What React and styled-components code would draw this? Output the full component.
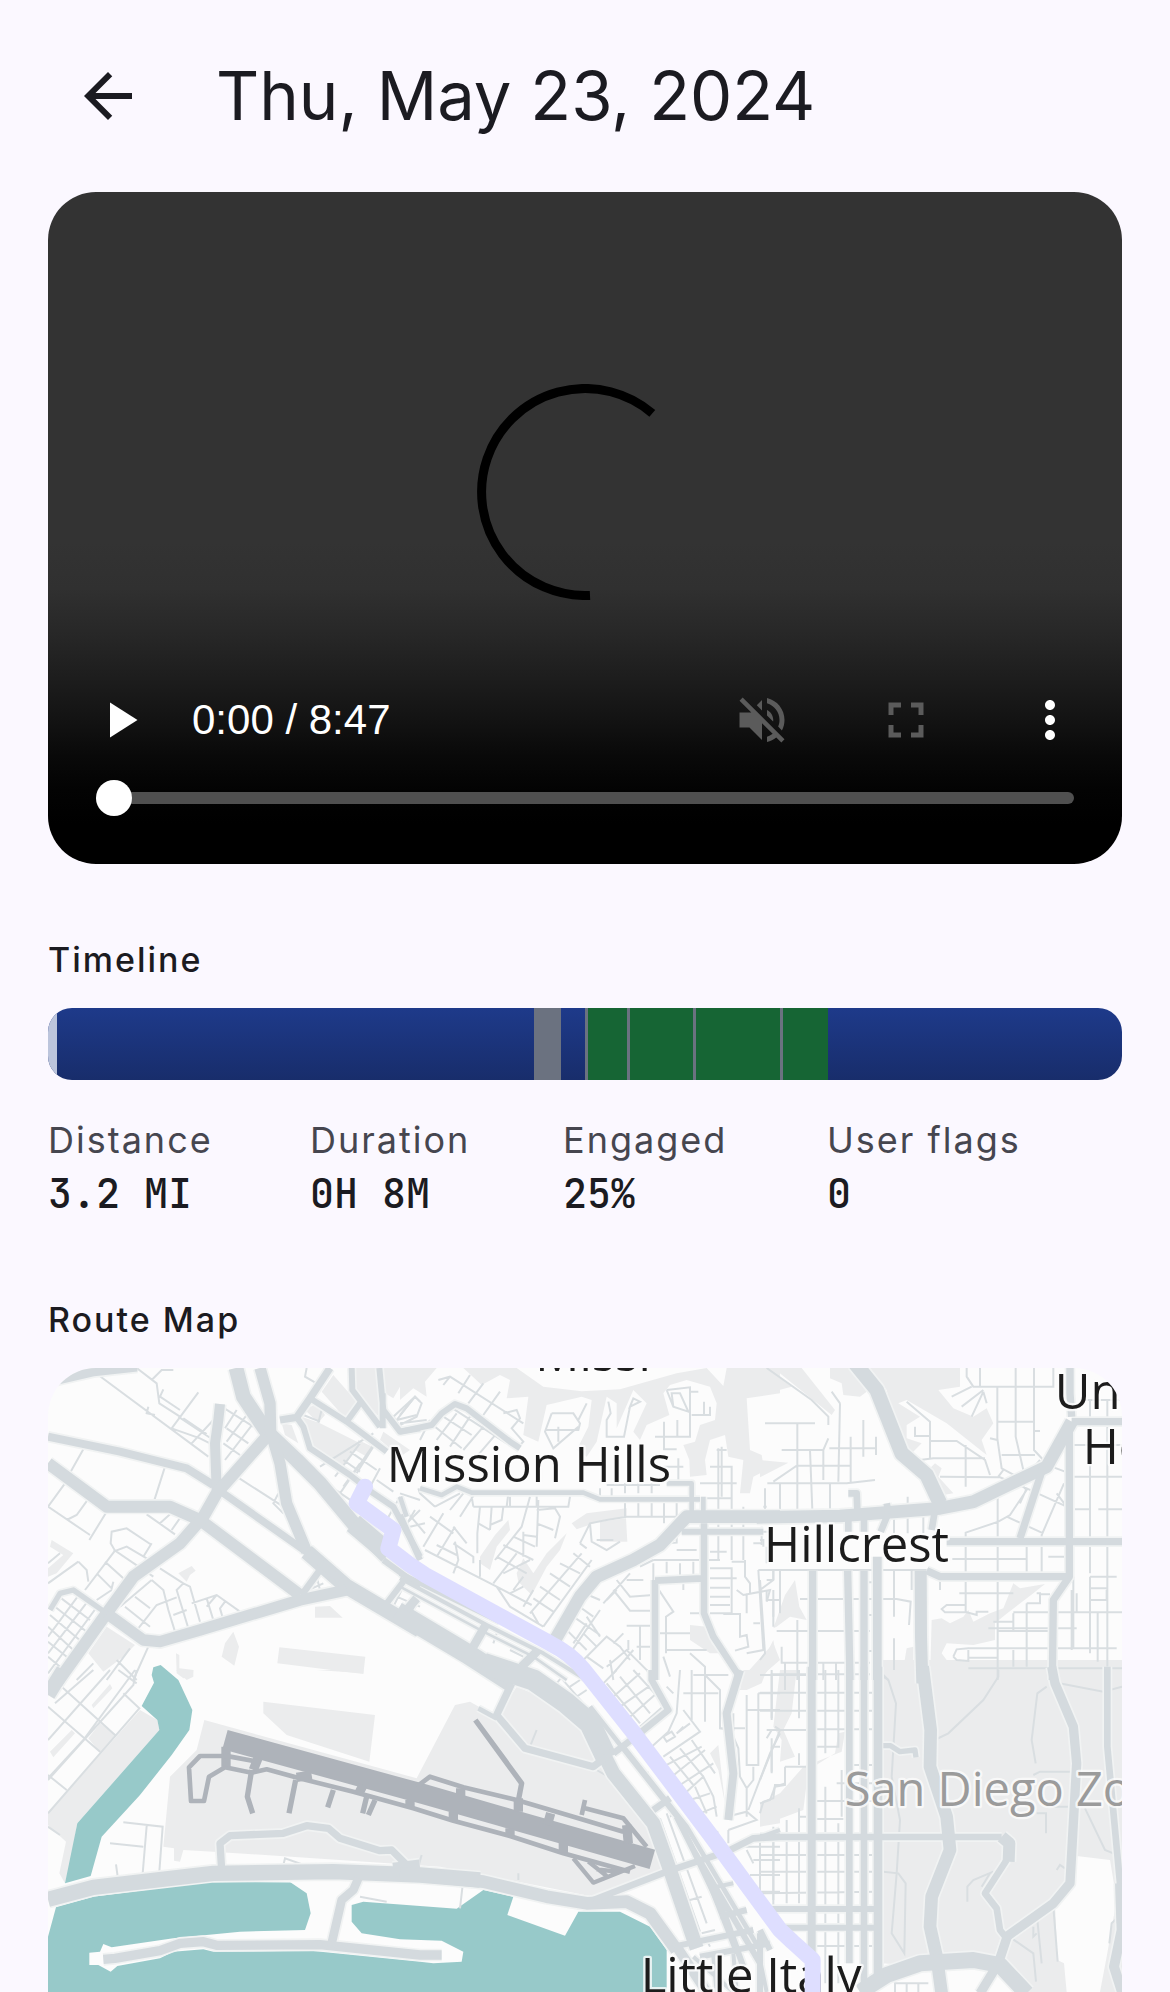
import React from 'react';
import styled, { createGlobalStyle } from 'styled-components';

const GlobalStyle = createGlobalStyle`
  *, *::before, *::after { box-sizing: border-box; }
  body {
    margin: 0;
    background: #fbf8ff;
    color: #1b1b21;
    font-family: Inter, 'Liberation Sans', sans-serif;
  }
`;

const Page = styled.div`
  display: flex;
  flex-direction: column;
  overflow: hidden;
`;

const TopBar = styled.header`
  display: flex;
  align-items: center;
  gap: 36px;
  height: 192px;
  padding: 0 36px;
`;

const BackButton = styled.button`
  display: grid;
  place-items: center;
  width: 144px;
  height: 144px;
  padding: 0;
  border: 0;
  border-radius: 50%;
  background: transparent;
  color: inherit;
`;

const Title = styled.h1`
  margin: 0;
  font-size: 67px;
  line-height: 84px;
  font-weight: 400;
  white-space: nowrap;
`;

const Content = styled.main`
  display: flex;
  flex-direction: column;
  gap: 72px;
  padding: 0 48px;
`;

const Player = styled.section`
  position: relative;
  display: flex;
  flex-direction: column;
  justify-content: flex-end;
  aspect-ratio: 1074 / 672;
  border-radius: 48px;
  overflow: hidden;
  background: linear-gradient(
    to bottom,
    #333333 52%,
    #303030 59%,
    #272727 66%,
    #1c1c1c 73%,
    #121212 79%,
    #090909 84%,
    #030303 89%,
    #000000 94%
  );
`;

const Spinner = styled.svg`
  position: absolute;
  top: 192px;
  left: 50%;
  width: 216px;
  height: 216px;
  margin-left: -108px;
`;

const Controls = styled.div`
  display: flex;
  align-items: center;
  height: 96px;
  margin-bottom: 12px;
`;

const ControlButton = styled.button`
  display: grid;
  place-items: center;
  width: 144px;
  height: 96px;
  padding: 0;
  border: 0;
  background: transparent;
  color: #ffffff;
  &:disabled { color: #5b5b5b; }
`;

const Time = styled.span`
  flex: 1;
  color: #ffffff;
  font-family: 'Liberation Sans', Arial, sans-serif;
  font-size: 42px;
  line-height: 48px;
`;

const Seek = styled.input`
  appearance: none;
  height: 36px;
  margin: 0 48px 48px;
  background: transparent;
  &::-webkit-slider-runnable-track {
    height: 12px;
    border-radius: 6px;
    background: #505050;
  }
  &::-webkit-slider-thumb {
    appearance: none;
    width: 36px;
    height: 36px;
    margin-top: -12px;
    border-radius: 50%;
    background: #ffffff;
  }
`;

const Section = styled.section`
  display: flex;
  flex-direction: column;
  gap: 24px;
`;

const SectionTitle = styled.h2`
  margin: 0;
  font-size: 34px;
  line-height: 48px;
  font-weight: 500;
  letter-spacing: 2px;
`;

const Track = styled.div`
  position: relative;
  height: 72px;
  border-radius: 24px;
  overflow: hidden;
  background: linear-gradient(to bottom, #1e3a8a, #182d6b);
`;

const Segment = styled.div`
  position: absolute;
  top: 0;
  bottom: 0;
  background: ${(p) => p.$color};
`;

const Stats = styled.dl`
  display: grid;
  grid-template-columns: 262fr 253fr 264fr 295fr;
  margin: 12px 0 0;
`;

const StatLabel = styled.dt`
  color: #46464f;
  font-size: 36px;
  line-height: 48px;
  letter-spacing: 2px;
`;

const StatValue = styled.dd`
  margin: 0;
  font-family: 'JetBrains Mono', 'DejaVu Sans Mono', monospace;
  font-size: 40px;
  line-height: 60px;
  font-weight: 500;
`;

const MapFrame = styled.div`
  border-radius: 48px 48px 0 0;
  overflow: hidden;
  background: #fcfcfc;
`;

const MapDrawing = styled.svg`
  display: block;
  width: 100%;
  height: auto;
`;

const MapLabel = styled.text`
  fill: ${(p) => (p.$muted ? '#9b9b9b' : '#1c1c1c')};
  font-family: 'Open Sans', 'Noto Sans', sans-serif;
  font-size: ${(p) => (p.$muted ? 141 : 147)}px;
  font-weight: ${(p) => (p.$muted ? 500 : 400)};
  paint-order: stroke;
  stroke: rgba(252, 252, 252, 0.8);
  stroke-width: 14px;
  stroke-linejoin: round;
`;

function Icon({ path, size = 60 }) {
  return (
    <svg width={size} height={size} viewBox="0 0 24 24" fill="currentColor" aria-hidden="true">
      <path d={path} />
    </svg>
  );
}

const ICONS = {
  back: 'M20 11H7.83l5.59-5.59L12 4l-8 8 8 8 1.41-1.41L7.83 13H20v-2z',
  play: 'M8 5v14l11-7z',
  muted:
    'M16.5 12c0-1.77-1.02-3.29-2.5-4.03v2.21l2.45 2.45c.03-.2.05-.41.05-.63zm2.5 0c0 .94-.2 1.82-.54 2.64l1.51 1.51C20.63 14.91 21 13.5 21 12c0-4.28-2.99-7.86-7-8.77v2.06c2.89.86 5 3.54 5 6.71zM4.27 3L3 4.27 7.73 9H3v6h4l5 5v-6.73l4.25 4.25c-.67.52-1.42.93-2.25 1.18v2.06c1.38-.31 2.63-.95 3.69-1.81L19.73 21 21 19.73l-9-9L4.27 3zM12 4L9.91 6.09 12 8.18V4z',
  fullscreen:
    'M7 14H5v5h5v-2H7v-3zm-2-4h2V7h3V5H5v5zm12 7h-3v2h5v-5h-2v3zM14 5v2h3v3h2V5h-5z',
  more: 'M12 8c1.1 0 2-.9 2-2s-.9-2-2-2-2 .9-2 2 .9 2 2 2zm0 2c-1.1 0-2 .9-2 2s.9 2 2 2 2-.9 2-2-.9-2-2-2zm0 6c-1.1 0-2 .9-2 2s.9 2 2 2 2-.9 2-2-.9-2-2-2z',
};

const SEGMENTS = [
  { from: 0, to: 9, color: '#bcc5dc' },
  { from: 486, to: 513, color: '#6b7280' },
  { from: 537, to: 780, color: '#166534' },
  { from: 537, to: 540, color: '#6b7280' },
  { from: 579, to: 582, color: '#6b7280' },
  { from: 645, to: 648, color: '#6b7280' },
  { from: 732, to: 735, color: '#6b7280' },
];
const ROUTE_LENGTH = 1074;

const STATS = [
  ['Distance', '3.2 MI'],
  ['Duration', '0H 8M'],
  ['Engaged', '25%'],
  ['User flags', '0'],
];

// The map is split into sectors; each keeps its own origin in map units.
const SECTORS = [
  {
    x: -24,
    y: -24,
    parks:
      'M845 95L880 45L950 125L920 180zM795 150L830 130L855 165L835 188zM785 170L840 190L960 250L910 320L805 265zM940 24H1010L1025 180L945 90zM1030 24H1140V80L1080 80L1060 115L1035 100zM725 190L755 195L775 250L735 225zM145 880L200 800L285 855L250 890L190 935zM545 890L555 850L580 815L597 860L583 917zM415 640L455 618L467 632L450 645L440 665zM825 740L870 738L908 773H825zM718 862L976 890L970 942L712 910zM408 880L418 885V925L460 930L458 950L430 955L410 940zM35 540L100 580L50 640L24 650V625L70 585L30 560zM955 240L1000 262L980 290L945 270zM1030 215L1110 270L1080 290L1020 240z',
    minor:
      'M175 45L505 290M290 24L350 70L358 130L420 170M400 30H365L335 60M420 150L360 110L370 88M475 97L395 205M325 140L320 160L345 165M520 180L455 250M545 140L640 200M590 150L555 205M620 165L560 245M640 190L555 300M560 205L625 250M550 250L600 285M430 175L500 222M395 205L480 235L510 250M415 170L520 240M130 268L92 335M375 320L340 430M75 370L24 440M24 440L150 525M150 410L110 465L80 480M200 455L148 540M320 463L405 523M410 445L360 490M430 460L395 510M590 350L730 440M715 400L700 430L730 460M335 550L310 590M335 555L260 505L215 515L212 550L225 572L340 650M225 572L135 690M220 575L260 560L320 595M195 605L250 655M170 640L215 685L220 665M215 690L170 720M115 605L140 630L145 665M24 670L115 605M120 700L24 830M150 715L24 880M175 735L24 940M60 712L150 780M45 740L140 815M30 765L125 845M24 800L100 870M24 845L80 890M24 890L60 920M360 625L430 670L450 680L480 785M430 670L410 690L445 805M335 660L370 690L385 750L405 815M335 660L240 740M285 710L330 745M255 740L330 800M295 805L350 735L410 712M400 765L440 750M455 730L530 705L600 755M500 715L520 780M555 725L540 745L550 780M530 705L500 740M325 860L280 960M270 865L200 960M230 900L290 960M160 910L110 960M840 320L1000 220M885 350L960 250M930 275L1010 330M910 300L960 335M900 400L1010 240M880 385L960 440M960 310L910 380M1000 260L950 340M1020 325L980 400M1010 360L1060 395M1080 410L1040 480M1140 450L1090 500M1070 470L1110 510M1140 420L1080 400M790 165L840 185M850 130L835 188M800 24L795 50L830 70M1125 110L1070 180L1130 165M1080 200L1060 170L1125 110L1140 125M1090 680L1060 740M1070 710L1140 740M960 130L1020 180M830 650L840 690M805 690L850 670M24 610L60 580',
    roads: [
      [50, 'M24 55L160 24L290 10'],
      [36, 'M24 310L200 440H390L480 480L780 705'],
      [24, 'M24 230L240 275L440 325L520 375'],
      [30, 'M540 132L535 180L525 250L530 390'],
      [44, 'M588 24L610 110L680 215L770 300L840 370L940 490L1040 590'],
      [34, 'M660 24L690 130L692 215L720 310L740 430L800 575'],
      [46, 'M800 575L920 680L1140 810'],
      [60, 'M940 490L1040 575'],
      [36, 'M680 230L530 400L490 470L420 550L280 650L200 760L50 970'],
      [22, 'M550 400L820 590L900 660'],
      [34, 'M200 760L310 840L360 845L480 810L780 720L920 690'],
      [16, 'M30 750L60 700L100 690L200 760'],
      [20, 'M785 705L840 630'],
      [22, 'M720 180L770 172L810 115L870 24'],
      [18, 'M770 172L790 200L810 265L930 345L1000 400L1060 440L1140 590'],
      [18, 'M810 115L920 185L1040 275M920 185L960 130'],
      [18, 'M935 24L937 90L1020 200M1018 24L1030 150L1080 215L1140 205M1028 205L1028 100'],
      [18, 'M1040 730L1090 665M1030 600L1140 680M1100 770L1120 730'],
    ],
  },
  {
    x: 1056,
    y: -24,
    parks:
      'M0 24H110L75 65L80 110L40 85L0 120zM190 24H350L430 80L545 94L660 88L830 40L920 24L970 78L980 24H1140V100L1040 115L1050 270L1085 285L1090 315L1140 310L1060 350L1050 400H1020L1030 300L985 290L975 225L930 240L915 300L920 345L870 350L868 300L850 255L885 245L900 195L945 180L950 130L930 80L860 60L810 75L790 100L808 165L740 195L720 240L700 215L740 130L700 90L650 205L650 130L620 110L590 245L560 290L530 270L565 200L575 120L545 110L440 135L415 245L370 225L385 110L320 115L330 60L300 45L245 75zM515 490L560 460L680 445V470L610 480L530 508zM600 485L678 475L682 545H600zM240 590L285 525L325 480L330 510L290 560L270 630L240 610zM350 640L370 595L400 640L440 580L500 520L480 570L440 620L395 705L355 665zM870 795L920 800L935 850L960 880L930 880L870 840zM1030 950L1120 850L1140 900L1070 960H1030z',
    minor:
      'M0 165L45 110L65 130L50 170L0 195M80 180L0 190M115 60L150 50L370 190M150 50L130 75M210 45L175 100M250 70L205 130M300 95L250 165M310 160L350 150L360 175L335 205L370 245L355 260M130 170L215 225M105 200L185 265M150 140L320 250M90 180L60 240M170 160L110 240M210 170L150 260M250 200L190 270M290 220L230 290M455 160H520L540 190L535 210H440M455 160L435 215L460 265L535 200M475 200L475 245M560 130L535 180M700 115L720 125L690 140zM690 140L672 230H620V180L632 160L625 125M800 90L870 82V230H765M800 90L820 140L865 155L840 100L815 100L820 140M870 95H895M875 165L930 165V140M912 125V165M792 185V270M832 180V230M790 268H830M950 270H980M955 265V455M930 320L995 320V455M900 370H1010M900 415H995M835 295V380M790 320H850M220 440H320L325 400M220 440L215 410M320 440H410V400M330 440V410M410 440L505 440L510 410M55 385L60 400L105 440M105 440L180 400M150 450L190 400M180 470L225 400M240 440L232 520V580M275 440L270 510M310 440L305 480L270 495M270 510L235 490M390 410L365 500L285 600M415 420L410 560M410 450L465 445L480 470L465 535M410 490L460 510M370 515V590M370 525L410 530M130 460L70 560M165 500L110 590M90 470L160 520M160 500L200 550M160 550L220 590V610M110 555L170 585M75 570L290 680M165 545L175 600L160 640M240 600V650M310 555L400 600M290 590L380 640M340 530L405 560M280 670L350 580M290 680L330 740L430 800M310 640L390 600M340 690L370 650M290 680L395 735M430 800L575 600M390 760L545 580M370 740L400 690M395 755L415 790M400 715L460 755M420 680L480 720M450 640L510 680M480 610L540 640M520 580L570 620M540 550L570 490L620 480L680 470H860M570 490L575 545L620 570L660 545M540 550L560 565M590 540H640M675 410V470M715 410V470M755 410V470M792 410V490M830 410V470M600 385V410M635 385V410M675 370V400M715 370V400M755 370V400M620 375H780M760 600H960M720 620L760 600M760 610V680M800 550L830 548V520M800 605V640M830 570H890M840 610V655M880 605V655M690 640L610 730M730 660H680M650 660L690 710L760 705M640 690L690 752H755M620 720L650 690M680 797H750M720 797V900M710 860H760M770 820H870M770 680L820 755L798 770V880M798 870H920M790 890L810 950M870 880L915 920V960M930 575H980M955 480V600M995 480V600M1030 440V600M930 625H995V760H930M930 655H1010M930 683H990M930 710H990M930 735H990M995 605H1035M1035 600V650L1050 670V700M1010 690L1030 705L1110 690L1100 725M1075 630H1140M1075 630L1090 870L1040 880M1060 790L1080 790M970 762H1020V830L1040 825L1045 860L1005 872M1085 555V500M1085 550H1060M1120 660V630M1100 560V610M1120 720V800M870 760H905M850 670V690M560 790L520 850M600 750L510 880M590 860L550 820M550 900L620 830L660 860L690 900M640 850L670 820M620 920L680 870L760 950M560 890L610 925M630 900L640 960M700 870L640 940M685 840V870M530 690L600 720M510 720L580 770M560 770L600 830M490 800L560 870M520 770L600 825M965 260V410M1040 700V760M20 455L75 520M45 450L10 510M30 500L75 490M330 870L370 890M290 820L280 850M330 700L370 680',
    roads: [
      [18, 'M0 215L95 195L125 160L165 132L200 145L330 245L360 265'],
      [14, 'M60 385L125 405L170 380L215 398H550L600 418H900M0 410L20 470M800 370H875V470M910 410V480'],
      [38, 'M1140 470H860L780 555L700 600L590 650L540 710L465 840'],
      [18, 'M845 515H1090'],
      [20, 'M912 490V760L940 830L1015 945M765 660L765 960M765 662L905 655'],
      [18, 'M0 465L60 600'],
      [12, 'M0 655L260 795L430 880L560 960'],
      [8, 'M0 680L250 815L400 890L500 960'],
      [60, 'M-10 755L200 880L340 970'],
      [26, 'M220 860L260 790M365 920L415 870M20 750L50 715'],
      [16, 'M0 640L300 785'],
    ],
  },
  {
    x: 2136,
    y: -24,
    parks:
      'M0 24H20L95 80L0 105zM40 24H125L225 150L215 165zM210 24H270L320 95L300 110L250 105L245 70L210 55zM330 24H600V80L535 90L580 145L640 170L680 145L700 190L665 240L680 285L560 190L440 120L415 130L480 170L440 195L440 235L485 250L450 285L400 180L380 90zM505 330L525 310L545 325L535 350L580 400L550 405L510 350zM0 300L85 308L0 352zM40 805L75 705L105 660L118 740L140 780L90 770L50 800zM515 780L545 775L570 790L610 770L625 750L640 785L690 760L730 745L760 670L780 685L855 672L820 700L735 765L705 790V840L640 855L560 850L545 880L575 920L540 925L545 960H510zM370 930L430 925L440 865L460 860V960H370zM0 920L40 840L50 900L0 960zM520 925H1086V960H520z',
    minor:
      'M15 190H165M112 190V265M65 270H190L205 235M190 270V360M150 270L157 450M112 265V450M240 130L235 365M215 95L240 130M310 180V290M208 265H345M348 230V285M272 230V370M40 365L110 317H270M22 370H260L345 360M60 370V450M210 370V450M15 385V450M10 440H20M620 24V50L640 80H880V24M660 24V80M767 24V230L790 330M822 24V270L850 300M712 80V185H820M712 185V235L725 325L790 360L840 300M725 285H825M820 213H840M690 235L712 240M575 110L635 80M670 90L605 140M670 95L635 170M670 95L680 130M440 125L510 185V295M465 200L465 228H510V243H590L675 300L690 345M480 300L520 295H675M617 255V380M540 350L720 352L800 385M715 350L730 330M20 24L155 120L205 170V195M940 255H1086M940 350H1086M945 448H990M1015 448H1086M990 120V448M1042 120V640M990 345V640M1086 120H960M875 320L915 335M890 400L920 440M800 385L920 440M780 370L800 390L750 465L715 485L617 518V755M912 370L845 525V640M740 470L850 520M713 400V960M800 385L780 430M577 597H800V655M800 540V597M865 590H915M443 410V520M490 470V520M402 470V520M0 515H30M0 540H10V560M0 630H500M0 690L40 660V630M60 630V760M20 660H40M20 690L20 720H60M40 690V770M0 660L15 880L0 900M50 813H330M112 780V960M320 765H340M320 667H340M320 873H340M402 630V770M402 835V930M340 717H410L452 725L447 795M120 717H340M455 630V690M500 640L540 650V690M598 700H760M617 735H560L545 747L555 757H620L650 765V755H685M800 730H840V700H830M760 760V810M760 757H930M700 785H760M685 805H950M800 730V920M760 870V920M712 813H870M580 890L590 868L625 865H1000M580 890L590 900L625 903V870M625 925H1086M625 893H712M940 650V865H1070M935 690V870M990 650H1070M990 685H1040M990 720H1040V690M1042 640V920M990 650V880M1013 760V905M850 757H1086M950 700V760M1030 865H1070M840 703H870M65 860V908H330M75 908V960M150 908V960M190 908V960M228 908V960M35 943H330M370 945L385 960',
    roads: [
      [44, 'M285 10L350 90L425 280L500 345L540 430'],
      [38, 'M-10 472L240 468L540 445L640 425L860 320L935 185'],
      [22, 'M935 185H1086M930 24V100L935 170M928 185V650L880 720L877 960'],
      [22, 'M560 545H1086M500 632L540 650H925'],
      [22, 'M850 320L780 535'],
      [20, 'M265 400H290L292 450M265 470V515M312 470V515M380 430L385 455M385 460L362 515M525 450L515 510'],
      [22, 'M158 632V960M263 632L270 960M312 632V960'],
      [26, 'M352 590V960'],
      [36, 'M482 632L483 830L487 970'],
      [16, 'M1042 925V960'],
    ],
  },
  {
    x: -24,
    y: 906,
    parks:
      'M493 150L1130 325L1245 105L1290 95L1370 140L1430 50L1540 95L1620 170L1680 260L1780 400L1840 470L1880 600L1660 680L1510 650L1200 590L520 545L430 540L420 575L402 572V535L370 530L390 320L470 240zM670 95L1005 135L988 275L740 195L670 130zM24 430L300 120L352 150L358 180L112 460L95 560L75 640L58 610L78 515L24 465zM145 205L180 160L228 195L182 250zM30 245L95 180L105 190L40 262zM155 105L210 42L217 55L160 115zM408 0H460V20L440 30zM830 0H970V10z',
    water:
      'M24 800L48 712L160 680L500 636L1060 640L1330 660L1420 680L1402 735L1575 797L1615 725L1740 725L1830 770L1880 840V990H24z',
    land: 'M750 636L800 670L812 730L795 780L600 785L400 805L215 832L190 822L180 845L148 848V885L175 885L212 905L232 888L360 865L400 845L490 838L520 845L820 843L1140 875L1180 880L1265 875L1270 845L1205 812L1080 808L965 790L935 755V705L970 695L1250 716L1330 660L1060 600z',
    creek:
      'M335 15L340 -8L362 -15L415 30L457 120L448 180L395 255L300 375L185 500L152 618L75 640L112 460L358 180L352 150L305 108L342 38z',
    minor:
      'M65 50L225 195M24 110L180 245M210 0L24 210M285 0L130 210L24 325M290 0L280 45L24 330M250 70L298 115L24 430M24 315L80 360M160 0L45 100M235 0L290 40M250 457L368 470L358 605M320 468L308 610M210 520L310 530M228 583L233 620M730 585L735 565L800 588M960 680L1040 695M24 470L60 495',
    roads: [
      [44, 'M70 0L24 75'],
      [46, 'M24 688L160 652L520 610L880 605L1140 615L1320 630'],
      [22, 'M545 600L540 520L570 497L730 490L800 467L865 475L900 505L1020 542L1055 540L1110 595'],
      [26, 'M955 625L940 660L905 690L875 820'],
      [28, 'M190 868L225 865L360 842L420 820L490 815L530 826L840 824L1140 855L1205 855'],
      [44, 'M1060 600L1140 590'],
    ],
    runway: [
      [60, 'M555 209L1150 372L1380 438L1837 568'],
      [14, 'M560 258H480L447 292L453 393H492L507 320L555 292L635 308L680 298L790 328L940 365L1120 415L1240 452L1410 498L1570 550L1770 605'],
      [16, 'M635 300L622 380L638 430M767 330L747 430M880 360L863 412M980 380L968 430M1005 390L985 435'],
      [28, 'M558 230V290M640 300L655 262M770 322L815 315M950 352L975 365M1110 390V412'],
      [14, 'M550 256L660 276M1130 350L1170 320L1270 352L1430 390L1600 440L1750 485M1625 435L1635 390M1635 415L1750 445L1820 530'],
      [16, 'M1306 150L1445 340L1435 392'],
      [28, 'M1262 355V385M1435 385V425M1532 430L1522 465M1240 425V450M1410 475V498M1570 515V548M1760 465L1765 520'],
      [13, 'M1600 565L1660 638L1785 588M1645 575L1700 618M1670 598L1740 606'],
    ],
  },
  {
    x: 1056,
    y: 906,
    parks:
      'M1030 0H1100L1085 40L1040 60L1020 60zM930 250L955 225L975 400L955 300zM1080 430L1140 385V460L1080 470z',
    minor:
      'M410 180L390 230M590 300L625 320L720 440M188 645L180 715M65 555L55 590M355 610V630M610 40L650 0M640 80L720 10M660 110L760 40M690 140L770 70M720 170L800 100M620 40L720 160M660 20L750 130M700 0L800 110M740 0L770 30M840 0L830 130L805 185L755 230M820 70L800 50M850 70H955M875 0V150M915 0V155M880 15H985M915 15L960 60V175L1000 180V130M960 175H1035M1040 75V285H1075V70M1040 120H1140M1115 0V150M1115 15H1140M1075 70H1140M1000 200L1015 235L1020 320L1040 355L1060 330V290M1040 355V440M1140 190L1110 250L1045 420M1115 230V310M980 440L1040 425L1070 450L985 480M985 480L985 520M1080 430L1090 395L1120 385L1125 345H1140M850 120L900 185L790 260M870 160L830 190L850 170M875 210L945 310M840 235L910 320M810 260L880 345M790 290L905 230M815 320L915 240M840 345L940 280M855 370L910 320L940 380L950 440M870 390L930 370M885 350L920 430M900 430L950 410M940 490L955 485M790 200L800 215L825 200L815 185zM1020 530H1140M1060 570H1140M1050 615H1140M1080 665H1140M1080 510V650M1120 510V720M1040 540L1060 580M480 20L550 100M510 50L540 30M530 80L560 60M470 40L490 15M730 320L745 305M780 445L900 785M800 430L920 760M825 430L810 440M870 690L905 680M905 790L945 780M915 800L930 830',
    roads: [
      [64, 'M250 -20L400 30L500 100L570 160L620 265'],
      [42, 'M600 230L640 310L760 460L810 600L890 835'],
      [22, 'M335 40L290 135L375 235L580 290L620 260'],
      [14, 'M235 115L290 145'],
      [38, 'M0 610L250 635L440 680L560 700L680 695L750 730L830 840'],
      [20, 'M580 690L800 605L980 545L1060 505L1140 500'],
      [20, 'M640 250L700 205L805 120L755 30V0M760 420L810 385'],
      [24, 'M1020 0L980 130L1000 310L985 450'],
      [14, 'M670 230L860 470L1080 840M570 110L830 440L920 620L1010 850'],
      [18, 'M830 440L880 540L980 750L1030 890M880 540L1080 880'],
      [18, 'M820 830L1060 780M900 860L1110 820M960 740L1040 720M1080 790V966'],
      [12, 'M950 650L1000 640M880 860L1000 966M940 860L950 966M1000 850L1010 966M1100 720H1140'],
      [30, 'M830 830L920 966'],
    ],
  },
  {
    x: 2136,
    y: 906,
    parks: 'M366 -30H1086V966H780L730 900L660 880L500 890L366 880zM0 460V400L60 370L130 290L245 245L255 185L235 190L225 250L145 300L130 420L50 450zM60 0H110L95 130L70 180L105 260L60 275L65 210L40 170z',
    land: 'M950 558L1050 570L1070 690L1040 860L1020 966H920L912 880L892 870L885 700L930 640zM350 966V925L510 905V966zM570 966L575 905L680 895L650 966z',
    minor:
      'M0 15H150M0 68H370M0 122H370M170 178H340M170 230H235V0M196 0V250M117 0V145M35 10V145M75 0V60M20 180H140M35 180L20 205M0 330L60 180L45 170M35 205V305M40 230H60M75 290H140M75 290V345L45 350L30 390L0 400M45 350L75 340M255 285H340M230 340H340M245 300V440M170 393H340M170 447H250M196 350V940M117 415V700M0 555H350M0 605H350M40 470V690M80 450V700M235 460V940M0 670L350 665M170 828H350M120 440H150M370 20L385 30L408 100L395 320L420 450L410 610L395 790L433 850L437 640L415 610L370 605M530 207L565 190L670 90L715 20V0M860 50L832 70L815 210L827 280M890 38L1030 65L1086 50M820 315L840 305H940M860 410H940M830 430H858V490M975 415L1035 540L1060 550M622 695V650L640 630L700 605M665 650L690 610M890 600L900 585L915 595M880 710L893 875M830 730L845 880M820 770V800L830 790M755 805L820 850L828 935M1070 745L1055 760L1048 820M405 966V940H505M440 940V966M475 940V966M117 250V285M0 500V700',
    roads: [
      [24, 'M155 -10V930'],
      [20, 'M268 -10V880M312 -10V966'],
      [26, 'M354 -10V930'],
      [38, 'M488 -10L512 180L510 290L560 440L570 540L515 680L510 770L530 860L545 970'],
      [20, 'M0 501H725'],
      [36, 'M725 500L748 520L746 575'],
      [20, 'M740 570L675 670L710 715L720 780L740 805'],
      [28, 'M875 -10L885 40L940 170L950 280L930 640L880 700L740 800'],
      [28, 'M745 790L715 880L660 970'],
      [20, 'M1042 -10V230L1080 640V760'],
      [30, 'M1080 640L1085 780L1062 890L1086 966'],
      [48, 'M300 966L380 915L480 880L640 870L720 885L800 970'],
      [16, 'M370 227H392L420 245L465 240L468 262'],
      [18, 'M30 717H350M70 773H350M0 780L30 840'],
      [12, 'M0 501L60 480M0 870L20 966'],
    ],
  },
];

const ROUTE =
  'M951 356L926 406L1036 486L1021 541L1085 590L1130 620L1356 744L1506 826Q1570 858 1606 904L1758 1096L1991 1406L2064 1506L2196 1686L2233 1721L2294 1776V1890';

function Layer({ children }) {
  return SECTORS.map((s, i) => (
    <g key={i} transform={`translate(${s.x} ${s.y})`}>
      {children(s)}
    </g>
  ));
}

function RouteMap() {
  return (
    <MapDrawing viewBox="0 0 3222 1872" role="img" aria-label="Route map">
      <g fill="#ebeced">
        <Layer>{(s) => <path d={s.parks} />}</Layer>
      </g>
      <Layer>
        {(s) => (
          <>
            {s.water && <path d={s.water} fill="#97c9c9" />}
            {s.land && <path d={s.land} fill="#fcfcfc" />}
            {s.creek && <path d={s.creek} fill="#97c9c9" />}
          </>
        )}
      </Layer>
      <g fill="none" stroke="#d9dee1" strokeWidth="6">
        <Layer>{(s) => <path d={s.minor} />}</Layer>
      </g>
      <g fill="none" stroke="#f1f3f3" strokeLinejoin="round">
        <Layer>
          {(s) => s.roads.map(([w, d]) => <path key={d} d={d} strokeWidth={w + 10} />)}
        </Layer>
      </g>
      <g fill="none" stroke="#d4dade" strokeLinejoin="round">
        <Layer>{(s) => s.roads.map(([w, d]) => <path key={d} d={d} strokeWidth={w} />)}</Layer>
      </g>
      <g fill="none" stroke="#aeb3ba" strokeLinejoin="round">
        <Layer>
          {(s) => (s.runway || []).map(([w, d]) => <path key={d} d={d} strokeWidth={w} />)}
        </Layer>
      </g>
      <MapLabel x="1462" y="9">Missi</MapLabel>
      <MapLabel x="1016" y="341">Mission Hills</MapLabel>
      <MapLabel x="2148" y="583">Hillcrest</MapLabel>
      <MapLabel x="3020" y="122">Un</MapLabel>
      <MapLabel x="3104" y="288">He</MapLabel>
      <MapLabel x="2390" y="1314" $muted>San Diego Zoo</MapLabel>
      <MapLabel x="1778" y="1874">Little Italy</MapLabel>
      <path
        d={ROUTE}
        fill="none"
        stroke="#dedeff"
        strokeWidth="48"
        strokeLinecap="round"
        strokeLinejoin="round"
      />
    </MapDrawing>
  );
}

export default function App() {
  return (
    <Page>
      <GlobalStyle />
      <TopBar>
        <BackButton aria-label="Back">
          <Icon path={ICONS.back} size={72} />
        </BackButton>
        <Title>Thu, May 23, 2024</Title>
      </TopBar>
      <Content>
        <Player aria-label="Video player">
          <Spinner viewBox="0 0 216 216" aria-hidden="true">
            <path
              d="M113 211.4A103.5 103.5 0 1 1 175.3 29.3"
              fill="none"
              stroke="#000000"
              strokeWidth="9"
            />
          </Spinner>
          <Controls>
            <ControlButton aria-label="Play">
              <Icon path={ICONS.play} />
            </ControlButton>
            <Time>0:00 / 8:47</Time>
            <ControlButton aria-label="Unmute" disabled>
              <Icon path={ICONS.muted} />
            </ControlButton>
            <ControlButton aria-label="Full screen" disabled>
              <Icon path={ICONS.fullscreen} />
            </ControlButton>
            <ControlButton aria-label="More options">
              <Icon path={ICONS.more} />
            </ControlButton>
          </Controls>
          <Seek type="range" min="0" max="527" defaultValue="0" aria-label="Seek" />
        </Player>
        <Section>
          <SectionTitle>Timeline</SectionTitle>
          <Track>
            {SEGMENTS.map((s) => (
              <Segment
                key={`${s.from}-${s.to}`}
                $color={s.color}
                style={{
                  left: `${(s.from / ROUTE_LENGTH) * 100}%`,
                  width: `${((s.to - s.from) / ROUTE_LENGTH) * 100}%`,
                }}
              />
            ))}
          </Track>
          <Stats>
            {STATS.map(([label, value]) => (
              <div key={label}>
                <StatLabel>{label}</StatLabel>
                <StatValue>{value}</StatValue>
              </div>
            ))}
          </Stats>
        </Section>
        <Section>
          <SectionTitle>Route Map</SectionTitle>
          <MapFrame>
            <RouteMap />
          </MapFrame>
        </Section>
      </Content>
    </Page>
  );
}
